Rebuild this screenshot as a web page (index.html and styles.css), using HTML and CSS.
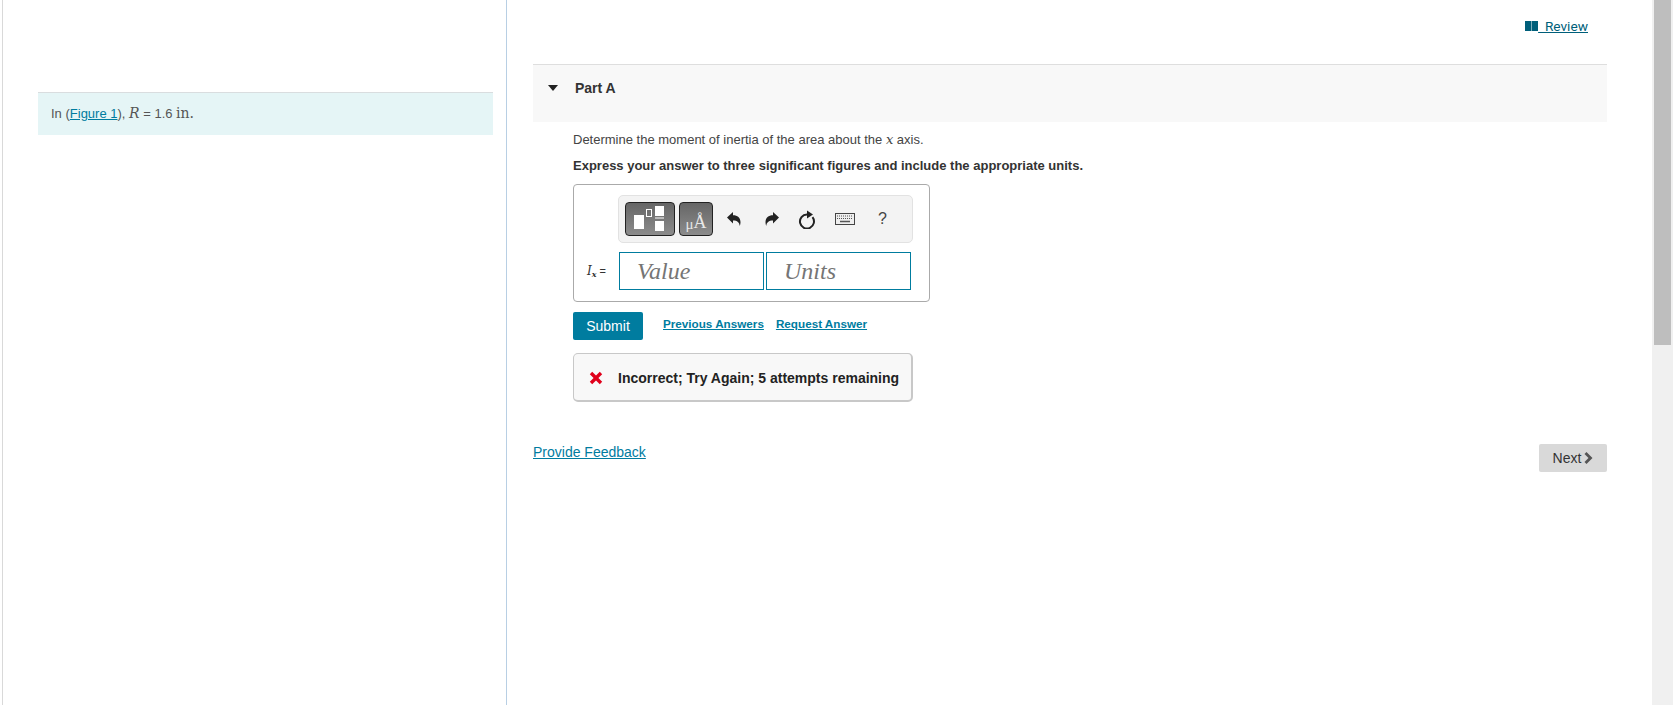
FILE: index.html
```html
<!DOCTYPE html>
<html lang="en">
<head>
    <meta charset="UTF-8">
    <title>Part A</title>
    <link rel="stylesheet" href="styles.css">
</head>
<body>
    <div class="page">
        <div class="intro-pane">
            <div class="intro-note">
                In (<a href="#" class="link">Figure 1</a>), <span class="math-var">R</span> = 1.6 <span class="math-unit">in.</span>
            </div>
        </div>
        <div class="main-pane">
            <div class="review-row">
                <a href="#" class="review-link">
                    <svg class="review-icon" viewBox="0 0 13 10" width="13" height="10">
                        <path d="M0 0h6v10H0zM7 0h6v10H7z" fill="#005f7a"/>
                        <path d="M6 0h1v10H6z" fill="#7fafbc"/>
                    </svg>
                    <span>&nbsp;&nbsp;Review</span>
                </a>
            </div>
            <div class="part-header">
                <svg class="caret" viewBox="0 0 10 6" width="10" height="6">
                    <path d="M0 0h10L5 6z" fill="#222"/>
                </svg>
                <span class="part-title">Part A</span>
            </div>
            <div class="part-body">
                <p class="question">Determine the moment of inertia of the area about the <span class="math-var">x</span> axis.</p>
                <p class="instruction">Express your answer to three significant figures and include the appropriate units.</p>

                <div class="answer-box">
                    <div class="toolbar">
                        <button class="tool-btn tool-templates">
                            <svg viewBox="0 0 36 26" width="36" height="26">
                                <rect x="0" y="9" width="10" height="14" fill="#fff"/>
                                <rect x="12.5" y="3.5" width="5" height="7" fill="none" stroke="#fff"/>
                                <rect x="21" y="0" width="9" height="10" fill="#fff"/>
                                <rect x="21" y="11.500" width="9" height="1" fill="#fff"/>
                                <rect x="21" y="15" width="9" height="10" fill="#fff"/>
                            </svg>
                        </button>
                        <button class="tool-btn tool-symbols"><span class="mu">μ</span>Å</button>
                        <svg class="tool-icon undo" viewBox="0 0 16 16" width="16" height="16">
                            <path d="M1 6.500 7 1v3.200c4.500 0 7.500 2.600 7.500 7 0 1.600-.3 2.800-.8 3.800-.3-3.400-2.300-5.400-6.700-5.400v2.900z" fill="#222"/>
                        </svg>
                        <svg class="tool-icon redo" viewBox="0 0 16 16" width="16" height="16">
                            <path d="M15 6.500 9 1v3.200c-4.500 0-7.500 2.600-7.500 7 0 1.600.3 2.800.8 3.800.3-3.400 2.300-5.400 6.700-5.400v2.900z" fill="#222"/>
                        </svg>
                        <svg class="tool-icon reset" viewBox="0 0 18 19" width="18" height="19">
                            <path d="M9 4.500A7 7 0 1 0 14.500 7.200" fill="none" stroke="#222" stroke-width="2"/>
                            <path d="M9 0.500 15 4.500 9 8.500z" fill="#222"/>
                        </svg>
                        <svg class="tool-icon keyboard" viewBox="0 0 20 12" width="20" height="12">
                            <rect x="0.500" y="0.500" width="19" height="11" fill="#eee" stroke="#444"/>
                            <path d="M2 3h16M2 5.500h16" stroke="#555" stroke-width="1" stroke-dasharray="1 1"/>
                            <path d="M5 8.500h10" stroke="#555" stroke-width="1.500"/>
                        </svg>
                        <span class="tool-help">?</span>
                    </div>
                    <div class="input-row">
                        <span class="input-label"><span class="math-i">I<sub>x</sub></span> =</span>
                        <div class="input-field">Value</div>
                        <div class="input-field">Units</div>
                    </div>
                </div>

                <div class="submit-row">
                    <button class="submit-btn">Submit</button>
                    <a href="#" class="link action-link">Previous Answers</a>
                    <a href="#" class="link action-link">Request Answer</a>
                </div>

                <div class="feedback-box">
                    <svg class="cross" viewBox="0 0 14 14" width="14" height="14">
                        <path d="M3.200 0.800 7 4.600 10.800 0.800 13.200 3.200 9.400 7 13.200 10.800 10.800 13.200 7 9.400 3.200 13.200 0.800 10.800 4.600 7 0.800 3.200z" fill="#e0001b"/>
                    </svg>
                    <span>Incorrect; Try Again; 5 attempts remaining</span>
                </div>
            </div>
            <div class="footer-row">
                <a href="#" class="link feedback-link">Provide Feedback</a>
                <button class="next-btn">Next
                    <svg viewBox="0 0 9 12" width="9" height="12">
                        <path d="M0.500 2 2.500 0 8.500 6 2.500 12 0.500 10 4.500 6z" fill="#555"/>
                    </svg>
                </button>
            </div>
        </div>
        <div class="scrollbar"><div class="scroll-thumb"></div></div>
    </div>
</body>
</html>
```

FILE: styles.css
```css
html, body {
    margin: 0;
    padding: 0;
    height: 100%;
    overflow: hidden;
}

body {
    font-family: "Liberation Sans", Arial, sans-serif;
    font-size: 13px;
    color: #333;
    background: #fff;
}

.page {
    display: flex;
    height: 705px;
}

.link {
    color: #007c9f;
    text-decoration: underline;
}

.math-var {
    font-family: "DejaVu Serif", serif;
    font-style: italic;
    font-size: 13px;
}

.intro-note .math-var {
    font-size: 14px;
}

.math-unit {
    font-family: "DejaVu Serif", serif;
    font-size: 14px;
}

/* left pane */
.intro-pane {
    width: 455px;
    margin-left: 2px;
    border-left: 1px solid #d9d9d9;
    border-right: 1px solid #b8cfe4;
    padding: 92px 13px 0 35px;
}

.intro-note {
    background: #e5f5f6;
    border-top: 1px solid #d9dddf;
    height: 42px;
    line-height: 41px;
    padding-left: 13px;
    color: #555;
}

/* right pane */
.main-pane {
    flex: 1;
    padding: 0 45px 0 26px;
}

.review-row {
    display: flex;
    justify-content: flex-end;
    height: 64px;
    padding-top: 18px;
    padding-right: 19px;
    box-sizing: border-box;
}

.review-link {
    color: #005f7a;
    text-decoration: underline;
    height: 15px;
    display: flex;
    align-items: center;
    font-family: Roboto, sans-serif;
    font-size: 13.7px;
}

.review-icon {
    display: block;
}

.part-header {
    display: flex;
    align-items: flex-start;
    height: 42px;
    border-top: 1px solid #dedede;
    background: #f8f8f8;
    padding-top: 15px;
    padding-left: 15px;
}

.caret {
    margin-top: 5px;
}

.part-title {
    margin-left: 17px;
    font-weight: bold;
    font-size: 14px;
    line-height: 16px;
    color: #333;
}

.part-body {
    padding-left: 40px;
}

.question {
    margin: 8px 0 0;
    line-height: 20px;
    color: #444;
}

.instruction {
    margin: 6px 0 0;
    line-height: 20px;
    font-weight: bold;
}

.answer-box {
    width: 311px;
    height: 106px;
    margin-top: 8px;
    border: 1px solid #aaa;
    border-radius: 4px;
    padding: 10px 0 0 44px;
}

.toolbar {
    display: flex;
    align-items: center;
    width: 287px;
    height: 46px;
    background: #f3f3f3;
    border: 1px solid #e2e2e2;
    border-radius: 5px;
    padding-left: 6px;
}

.tool-btn {
    height: 34px;
    padding: 0;
    border: 1px solid #222;
    border-radius: 4px;
    background: linear-gradient(#666, #8c8c8c);
    color: #e8e8e8;
    display: flex;
    align-items: center;
    justify-content: center;
}

.tool-templates {
    width: 50px;
    padding-left: 3px;
}

.tool-symbols {
    width: 34px;
    margin-left: 4px;
    font-family: "Liberation Serif", serif;
    font-size: 18px;
    align-items: flex-end;
    padding-bottom: 2px;
}

.mu {
    font-size: 15px;
}

.tool-icon {
    display: block;
}

.undo {
    margin-left: 13px;
}

.redo {
    margin-left: 22px;
}

.reset {
    margin-left: 18px;
}

.keyboard {
    margin-left: 19px;
}

.tool-help {
    margin-left: 23px;
    font-size: 16px;
    color: #444;
}

.input-row {
    display: flex;
    align-items: center;
    margin-top: 9px;
    margin-left: -31px;
    gap: 2px;
}

.input-label {
    width: 32px;
    margin-right: -2px;
    font-size: 11px;
}

.math-i {
    font-family: "DejaVu Serif", serif;
    font-style: italic;
    font-size: 12px;
}

.math-i sub {
    font-size: 8px;
    font-weight: bold;
    vertical-align: -2px;
}

.input-field {
    width: 126px;
    height: 36px;
    border: 1px solid #007c9f;
    padding-left: 17px;
    line-height: 36px;
    font-family: "Liberation Serif", serif;
    font-style: italic;
    font-size: 24px;
    color: #757575;
}

.submit-row {
    display: flex;
    align-items: flex-start;
    margin-top: 10px;
}

.submit-btn {
    width: 70px;
    height: 28px;
    padding: 0;
    border: none;
    border-radius: 2px;
    background: #007c9f;
    color: #fff;
    font-family: "Liberation Sans", Arial, sans-serif;
    font-size: 14px;
}

.action-link {
    margin-left: 12px;
    margin-top: 5px;
    font-weight: bold;
    font-size: 11.7px;
    line-height: 14px;
}

.submit-btn + .action-link {
    margin-left: 20px;
}

.feedback-box {
    display: flex;
    align-items: center;
    gap: 15px;
    width: 340px;
    height: 49px;
    margin-top: 13px;
    padding-left: 15px;
    padding-top: 1px;
    box-sizing: border-box;
    background: #f8f8f8;
    border: 1px solid #c8c8c8;
    border-bottom-width: 2px;
    border-right-width: 2px;
    border-radius: 5px;
    font-weight: bold;
    font-size: 14px;
    color: #222;
}

.footer-row {
    display: flex;
    justify-content: space-between;
    align-items: flex-start;
    margin-top: 42px;
}

.feedback-link {
    font-size: 14px;
}

.next-btn {
    width: 68px;
    height: 28px;
    padding: 0;
    border: none;
    border-radius: 2px;
    background: #d9d9d9;
    color: #333;
    font-family: "Liberation Sans", Arial, sans-serif;
    font-size: 14px;
    display: flex;
    align-items: center;
    justify-content: center;
    gap: 3px;
}

/* fake scrollbar, it is part of the picture */
.scrollbar {
    width: 21px;
    flex: none;
    background: #f0f0f0;
}

.scroll-thumb {
    width: 17px;
    height: 345px;
    margin-left: 2px;
    background: #bebebe;
}
```
